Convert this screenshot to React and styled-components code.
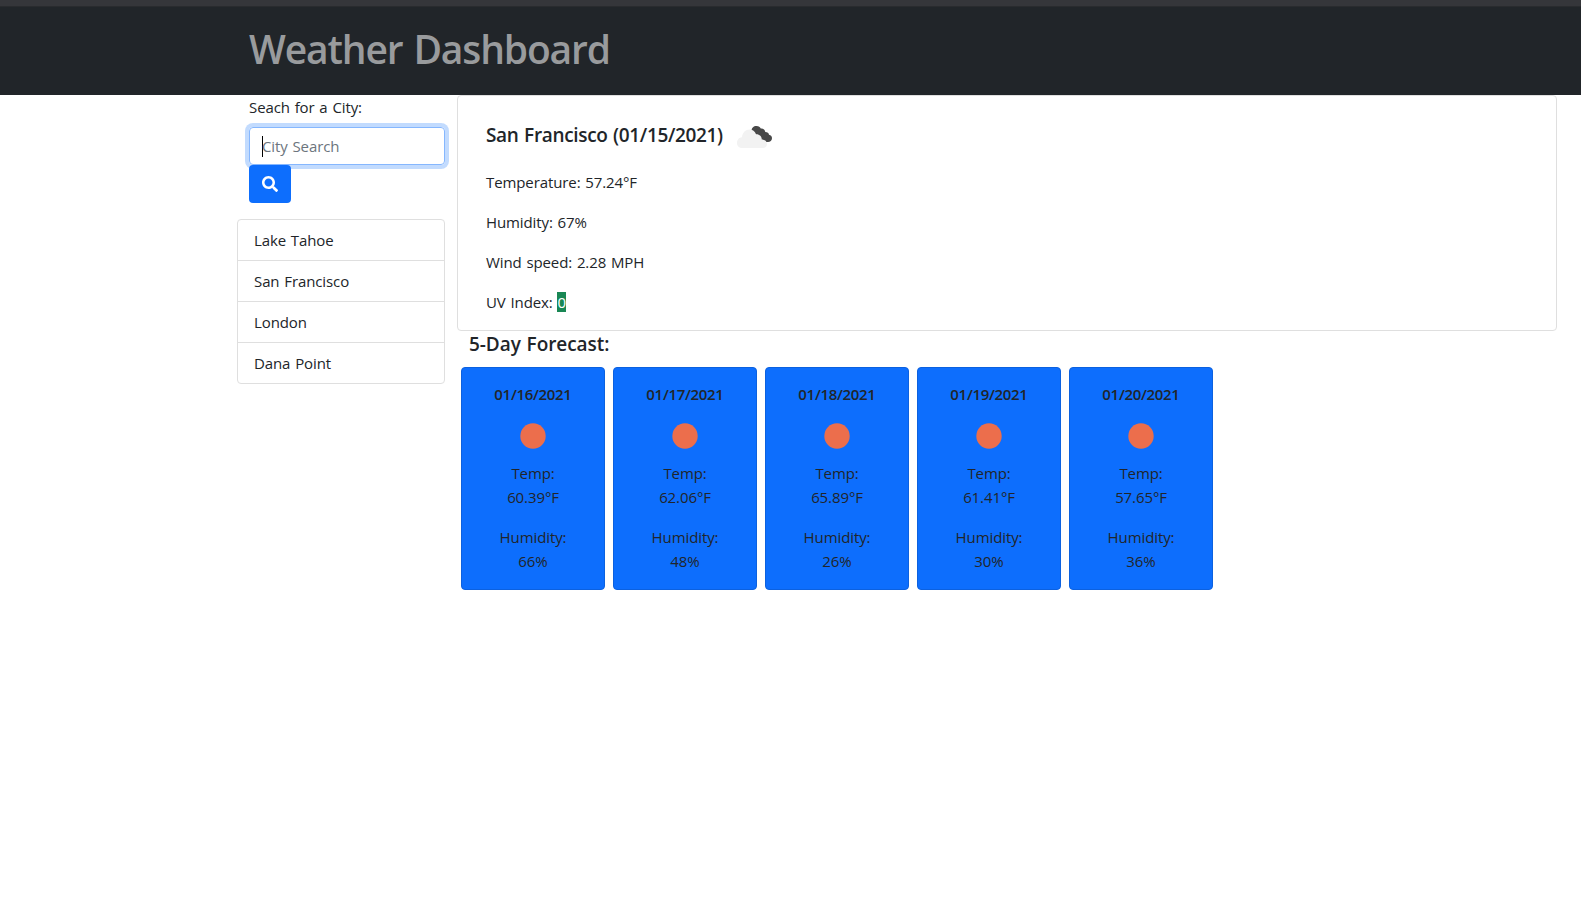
import React from 'react';
import styled, { createGlobalStyle } from 'styled-components';
import { FaSearch } from 'react-icons/fa';

const GlobalStyle = createGlobalStyle`
  *, *::before, *::after { box-sizing: border-box; }
  body {
    margin: 0;
    background: #fff;
    color: #212529;
    font-family: "Open Sans", "Noto Sans", sans-serif;
    font-size: 15px;
    letter-spacing: -0.1px;
    word-spacing: 1px;
    line-height: 24px;
  }
  h1, h5, h6, p, ul { margin: 0; padding: 0; }
`;

const TopStrip = styled.div`
  height: 6px;
  background: #35363a;
`;

const Header = styled.header`
  height: 89px;
  padding: 18px 249px 0;
  background: #212529;
  border-top: 1px solid #292b2e;
`;

const Title = styled.h1`
  font-size: 39px;
  font-weight: 600;
  line-height: 48px;
  letter-spacing: -1.15px;
  word-spacing: 2px;
  color: #999b9d;
`;

const Page = styled.main`
  display: flex;
  align-items: flex-start;
  gap: 12px;
  padding-left: 237px;
`;

const Sidebar = styled.aside`
  width: 208px;
`;

const SearchForm = styled.div`
  display: flex;
  flex-direction: column;
  align-items: flex-start;
  padding-left: 12px;
  margin-bottom: 16px;
`;

const Label = styled.label`
  margin-bottom: 8px;
`;

const SearchInput = styled.div`
  display: flex;
  align-items: center;
  width: 100%;
  height: 38px;
  padding: 0 12px;
  border: 1px solid #86b7fe;
  border-radius: 4px;
  box-shadow: 0 0 0 4px rgba(13, 110, 253, 0.25);
  color: #6c757d;
`;

const Caret = styled.span`
  width: 1px;
  height: 21px;
  margin-right: -1px;
  background: #000;
`;

const SearchButton = styled.button`
  display: flex;
  align-items: center;
  justify-content: center;
  position: relative;
  width: 42px;
  height: 38px;
  border: 0;
  border-radius: 4px;
  background: #0d6efd;
  color: #fff;
  font-size: 16px;
`;

const CityList = styled.ul`
  list-style: none;
  border: 1px solid #dfdfdf;
  border-radius: 4px;
`;

const City = styled.li`
  padding: 8px 16px;

  & + & { border-top: 1px solid #dfdfdf; }
`;

const Content = styled.section`
  width: 1100px;
`;

const CurrentCard = styled.article`
  height: 236px;
  padding: 14px 28px 0;
  border: 1px solid #dfdfdf;
  border-radius: 4px;
`;

const CurrentHeading = styled.h5`
  display: flex;
  align-items: center;
  height: 50px;
  margin-bottom: 10px;
  font-size: 19px;
  font-weight: 600;
  letter-spacing: -0.34px;
`;

const Reading = styled.p`
  margin-bottom: 16px;
`;

const UvBadge = styled.span`
  background: #198754;
  color: #fff;
`;

const ForecastTitle = styled.h5`
  padding: 1px 12px 0;
  height: 36px;
  font-size: 19px;
  font-weight: 600;
  letter-spacing: -0.07px;
`;

const ForecastRow = styled.div`
  display: flex;
  gap: 8px;
  padding-left: 4px;
`;

const DayCard = styled.article`
  display: flex;
  flex-direction: column;
  align-items: center;
  width: 144px;
  height: 223px;
  padding-top: 16px;
  border: 1px solid #0c61df;
  border-radius: 4px;
  background: #0d6efd;
  text-align: center;
`;

const DayDate = styled.h6`
  font-size: 15px;
  font-weight: 600;
  line-height: 20px;
  letter-spacing: -0.3px;
`;

const SunSvg = styled.svg`
  display: block;
  flex: none;
  margin: 19px 0 12px;
`;

const DayReading = styled.p`
  width: 90px;

  & + & { margin-top: 16px; }
`;

const Cloud = styled.svg`
  flex: none;
  margin: 3px 0 0 13.5px;
`;

const Sun = () => (
  <SunSvg width="26" height="26" viewBox="0 0 26 26">
    <circle cx="13" cy="13" r="12.7" fill="#ec6e4c" />
  </SunSvg>
);

const BrokenClouds = () => (
  <Cloud width="36" height="24" viewBox="0 0 36 24">
    <path
      fill="#484848"
      d="M15.500 6C15.500 3 17.500 1 20.500 1C22.800 1 24 2 24.800 3.500C27.500 3.200 29 4.800 29.300 7C31.500 7 32.800 8 33 9.800C35 10.200 36 11.500 36 13.300C36 15.600 34.300 17 32 17H28C26 17 25 15.800 24.500 14L20 9.500Z"
    />
    <path
      fill="#f2f2f2"
      d="M6 23C3 23 1 20.800 1 18C1 14.800 3 12.500 6 12.200C6.600 7.500 9.500 4.500 13.500 4.500C16.500 4.500 19 6.500 20 9.200C23.500 9 25.800 11.500 25.800 14.500C29 14.600 31 16.300 31 18.900C31 21.300 29.200 23 26.800 23Z"
    />
  </Cloud>
);

const cities = ['Lake Tahoe', 'San Francisco', 'London', 'Dana Point'];
const days = [
  ['01/16/2021', '60.39', 66],
  ['01/17/2021', '62.06', 48],
  ['01/18/2021', '65.89', 26],
  ['01/19/2021', '61.41', 30],
  ['01/20/2021', '57.65', 36],
];

export default function App() {
  return (
    <>
      <GlobalStyle />
      <TopStrip />
      <Header><Title>Weather Dashboard</Title></Header>
      <Page>
        <Sidebar>
          <SearchForm>
            <Label>Seach for a City:</Label>
            <SearchInput><Caret />City Search</SearchInput>
            <SearchButton aria-label="Search"><FaSearch /></SearchButton>
          </SearchForm>
          <CityList>{cities.map((c) => <City key={c}>{c}</City>)}</CityList>
        </Sidebar>
        <Content>
          <CurrentCard>
            <CurrentHeading>San Francisco (01/15/2021)<BrokenClouds /></CurrentHeading>
            <Reading>Temperature: 57.24°F</Reading>
            <Reading>Humidity: 67%</Reading>
            <Reading>Wind speed: 2.28 MPH</Reading>
            <Reading>UV Index: <UvBadge>0</UvBadge></Reading>
          </CurrentCard>
          <ForecastTitle>5-Day Forecast:</ForecastTitle>
          <ForecastRow>
            {days.map(([date, temp, humidity]) => (
              <DayCard key={date}>
                <DayDate>{date}</DayDate>
                <Sun />
                <DayReading>Temp:<br />{temp}°F</DayReading>
                <DayReading>Humidity:<br />{humidity}%</DayReading>
              </DayCard>
            ))}
          </ForecastRow>
        </Content>
      </Page>
    </>
  );
}
